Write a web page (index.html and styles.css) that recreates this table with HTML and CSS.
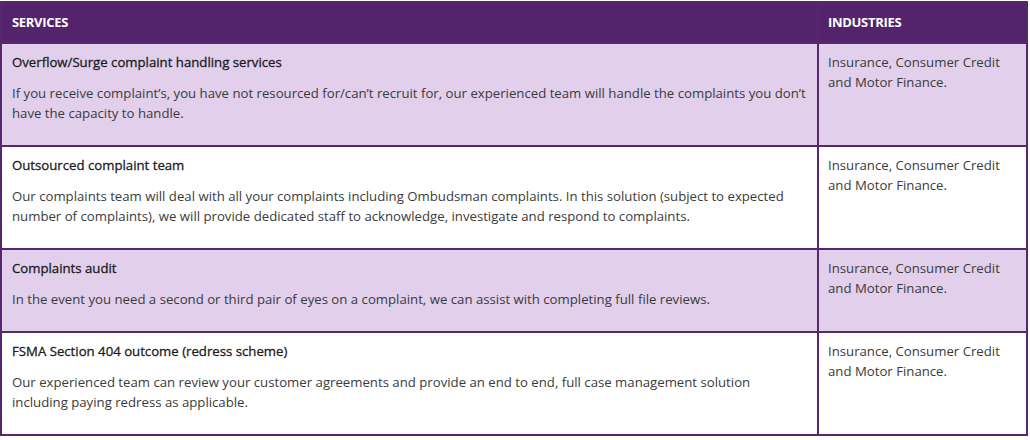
FILE: index.html
```html
<!DOCTYPE html>
<html lang="en">
<head>
<meta charset="utf-8">
<title>Services</title>
<link rel="stylesheet" href="styles.css">
</head>
<body>
<table class="services">
  <colgroup>
    <col class="col-service">
    <col class="col-industry">
  </colgroup>
  <thead>
    <tr>
      <th>SERVICES</th>
      <th>INDUSTRIES</th>
    </tr>
  </thead>
  <tbody>
    <tr class="shaded">
      <td>
        <p class="title">Overflow/Surge complaint handling services</p>
        <p>If you receive complaint’s, you have not resourced for/can’t recruit for, our experienced team will handle the complaints you don’t have the capacity to handle.</p>
      </td>
      <td><p>Insurance, Consumer Credit and Motor Finance.</p></td>
    </tr>
    <tr>
      <td>
        <p class="title">Outsourced complaint team</p>
        <p>Our complaints team will deal with all your complaints including Ombudsman complaints. In this solution (subject to expected number of complaints), we will provide dedicated staff to acknowledge, investigate and respond to complaints.</p>
      </td>
      <td><p>Insurance, Consumer Credit and Motor Finance.</p></td>
    </tr>
    <tr class="shaded">
      <td>
        <p class="title">Complaints audit</p>
        <p>In the event you need a second or third pair of eyes on a complaint, we can assist with completing full file reviews.</p>
      </td>
      <td><p>Insurance, Consumer Credit and Motor Finance.</p></td>
    </tr>
    <tr>
      <td>
        <p class="title">FSMA Section 404 outcome (redress scheme)</p>
        <p>Our experienced team can review your customer agreements and provide an end to end, full case management solution including paying redress as applicable.</p>
      </td>
      <td><p>Insurance, Consumer Credit and Motor Finance.</p></td>
    </tr>
  </tbody>
</table>
</body>
</html>
```

FILE: styles.css
```css
html, body {
  margin: 0;
  padding: 0;
  background: #ffffff;
}

body {
  padding-top: 1px;
  font-family: "Open Sans", "Liberation Sans", sans-serif;
  font-size: 13.2px;
  line-height: 20px;
  color: #3b3b3b;
}

.services {
  width: 1026px;
  border-collapse: collapse;
  table-layout: fixed;
  border: 2px solid #56266f;
}

.col-service { width: 817px; }
.col-industry { width: 209px; }

.services th,
.services td {
  border: 2px solid #56266f;
  text-align: left;
  vertical-align: top;
  padding: 8px 10px 10px 10px;
}

.services th {
  background: #53236b;
  color: #ffffff;
  font-size: 13px;
  font-weight: 700;
  letter-spacing: -0.3px;
  padding-top: 9px;
  padding-bottom: 10px;
}

.services td + td,
.services th + th {
  padding-left: 9px;
}

.services td p {
  margin: 0 0 11px 0;
}

.services td p:last-child {
  margin-bottom: 12px;
}

.services td .title {
  font-weight: 400;
  color: #1c1c1c;
  -webkit-text-stroke: 0.3px #1c1c1c;
}

.shaded td {
  background: #e1cfec;
}
```
